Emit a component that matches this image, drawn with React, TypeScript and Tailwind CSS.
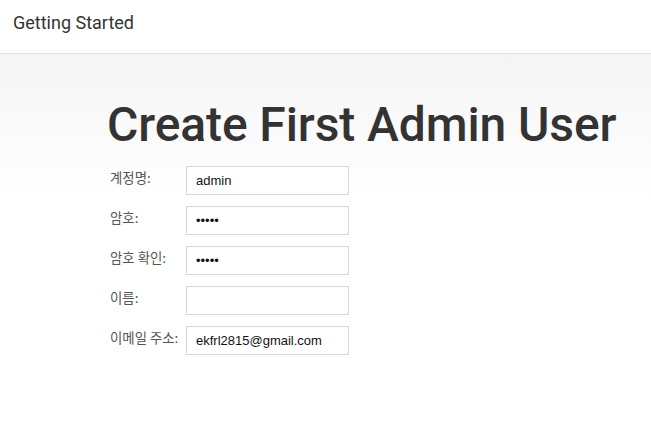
import React from 'react';

const fields = [
  { label: '계정명:', value: 'admin', type: 'text' },
  { label: '암호:', value: 'admin', type: 'password' },
  { label: '암호 확인:', value: 'admin', type: 'password' },
  { label: '이름:', value: '', type: 'text' },
  { label: '이메일 주소:', value: 'ekfrl2815@gmail.com', type: 'text' },
];

export default function App() {
  return (
    <div className="w-[651px] h-[426px] bg-white overflow-hidden" style={{ fontFamily: 'Roboto, "Noto Sans CJK KR", sans-serif' }}>
      {/* Header */}
      <div className="h-[54px] border-b border-[#e2e2e2] flex items-center px-[13px] bg-white">
        <span className="text-[18px] text-[#333] mb-[9px]">Getting Started</span>
      </div>

      {/* Body */}
      <div className="h-[372px] bg-gradient-to-b from-[#f5f5f5] to-white to-[40%]">
        <div className="pl-[107px] pt-[41px]">
          <h1 className="text-[48px] leading-[60px] font-medium text-[#333] tracking-[-0.1px]">Create First Admin User</h1>
        </div>
        <div className="pl-[110px] pt-[11px] flex flex-col gap-[11px]">
          {fields.map((f) => (
            <div key={f.label} className="flex items-start">
              <label
                className="w-[76px] pt-[1px] leading-[20px] text-[13.4px] text-[#555] whitespace-nowrap"
                style={{ fontFamily: '"Noto Sans CJK KR", sans-serif' }}
              >
                {f.label}
              </label>
              <input
                type={f.type}
                defaultValue={f.value}
                readOnly
                className="w-[163px] h-[29px] border border-[#d6d6d6] bg-white px-[9px] text-[13px] text-[#111] outline-none"
                style={{ fontFamily: '"Liberation Sans", Arial, sans-serif' }}
              />
            </div>
          ))}
        </div>
      </div>
    </div>
  );
}
